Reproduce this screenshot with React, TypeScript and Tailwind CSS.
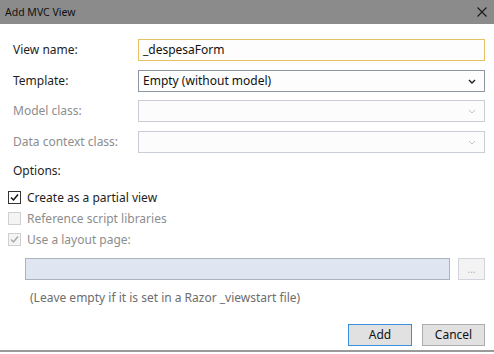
import React from 'react';

const font = "font-['Segoe_UI','Noto_Sans','Open_Sans',sans-serif]";

function Chevron({ disabled }: { disabled?: boolean }) {
  return (
    <svg width="8" height="5" viewBox="0 0 8 5" className="shrink-0">
      <path d="M1 1 L4 4 L7 1" fill="none" stroke={disabled ? '#c2c6cc' : '#1e1e1e'} strokeWidth={disabled ? 1 : 1.4} />
    </svg>
  );
}

function Check({ color }: { color: string }) {
  return (
    <svg width="11" height="11" viewBox="0 0 11 11">
      <path d="M2 5.5 L4.5 8 L9 2.5" fill="none" stroke={color} strokeWidth="1.5" />
    </svg>
  );
}

const FieldRow = ({ label, disabled, children, className = '' }: { label: string; disabled?: boolean; children: React.ReactNode; className?: string }) => (
  <div className={`flex items-center h-[22px] ${className}`}>
    <div className={`w-[138px] shrink-0 pl-[13px] ${disabled ? 'text-[#8d8d8d]' : 'text-[#1e1e1e]'}`}>{label}</div>
    <div className="flex-1">{children}</div>
  </div>
);

export default function App() {
  return (
    <div className={`w-[494px] h-[354px] bg-white flex flex-col text-[12px] leading-[16px] ${font}`}>
      <div className="h-[24px] bg-[#8b8b8b] flex items-center justify-between pl-[5px] pr-[7px] text-[#111] text-[10.5px]">
        <span>Add MVC View</span>
        <svg width="10" height="10" viewBox="0 0 10 10">
          <path d="M0.5 0.5 L9.5 9.5 M9.5 0.5 L0.5 9.5" stroke="#1a1a1a" strokeWidth="1.1" />
        </svg>
      </div>

      <div className="flex-1 flex flex-col pr-[9px]">
        <FieldRow label="View name:" className="mt-[15px]">
          <div className="h-[22px] border border-[#e5c365] bg-[#fdfdfd] flex items-center px-[4px] text-[#111]">_despesaForm</div>
        </FieldRow>
        <FieldRow label="Template:" className="mt-[9px]">
          <div className="h-[22px] border border-[#8c96a5] bg-[#fdfdfd] flex items-center justify-between pl-[4px] pr-[8px] text-[#111]">
            <span>Empty (without model)</span>
            <Chevron />
          </div>
        </FieldRow>
        <FieldRow label="Model class:" disabled className="mt-[8px]">
          <div className="h-[22px] border border-[#c9ced6] bg-[#fcfcfc] flex items-center justify-end pr-[8px]">
            <Chevron disabled />
          </div>
        </FieldRow>
        <FieldRow label="Data context class:" disabled className="mt-[9px]">
          <div className="h-[22px] border border-[#c9ced6] bg-[#fcfcfc] flex items-center justify-end pr-[8px]">
            <Chevron disabled />
          </div>
        </FieldRow>

        <div className="pl-[13px] mt-[10px] text-[#1e1e1e]">Options:</div>

        <div className="flex flex-col mt-[8px] pl-[8px]">
          <div className="flex items-center h-[21px] gap-[6px] text-[#1e1e1e]">
            <div className="w-[13px] h-[13px] border border-[#333] bg-white flex items-center justify-center">
              <Check color="#111" />
            </div>
            <span>Create as a partial view</span>
          </div>
          <div className="flex items-center h-[21px] gap-[6px] text-[#8d8d8d]">
            <div className="w-[13px] h-[13px] border border-[#cfcfcf] bg-[#f4f4f4]" />
            <span>Reference script libraries</span>
          </div>
          <div className="flex items-center h-[21px] gap-[6px] text-[#8d8d8d]">
            <div className="w-[13px] h-[13px] border border-[#cfcfcf] bg-[#f4f4f4] flex items-center justify-center">
              <Check color="#a8a8a8" />
            </div>
            <span>Use a layout page:</span>
          </div>
        </div>

        <div className="flex items-center gap-[8px] pl-[25px] mt-[8px]">
          <div className="flex-1 h-[22px] border border-[#a9b3c2] bg-[#dfe6f1]" />
          <div className="w-[27px] h-[22px] border border-[#d3d3dc] bg-[#f3f3f3] flex items-center justify-center text-[#b0b0b0] text-[10px]">...</div>
        </div>

        <div className="pl-[30px] mt-[10px] text-[#6d6d6d]">(Leave empty if it is set in a Razor _viewstart file)</div>

        <div className="flex justify-end gap-[10px] mt-[18px]">
          <button className="w-[64px] h-[22px] border border-[#3c8ee0] bg-[#e1e1e1] text-[#111]">Add</button>
          <button className="w-[63px] h-[22px] border border-[#adadad] bg-[#e1e1e1] text-[#111]">Cancel</button>
        </div>
      </div>

      <div className="h-[2px] bg-[#9a9a9a] mb-[2px]" />
    </div>
  );
}
